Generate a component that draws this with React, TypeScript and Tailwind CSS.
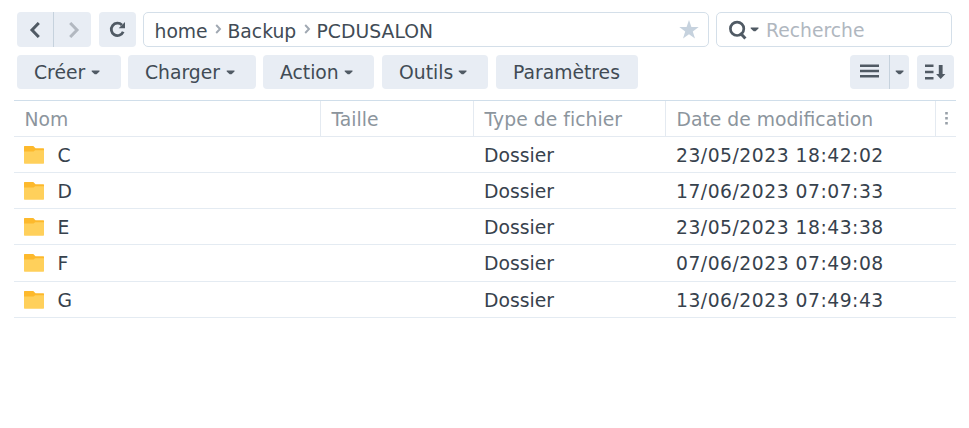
import { ReactNode } from "react";

const menus = [
  { label: "Créer", caret: true, size: "w-[104px] mr-[7px]" },
  { label: "Charger", caret: true, size: "w-[128px] mr-[7px]" },
  { label: "Action", caret: true, size: "w-[111px] mr-2" },
  { label: "Outils", caret: true, size: "w-[106px] mr-2" },
  { label: "Paramètres", caret: false, size: "w-[142px]" },
];

const files = [
  { name: "C", date: "23/05/2023 18:42:02", height: "h-9" },
  { name: "D", date: "17/06/2023 07:07:33", height: "h-9" },
  { name: "E", date: "23/05/2023 18:43:38", height: "h-9" },
  { name: "F", date: "07/06/2023 07:49:08", height: "h-[37px]" },
  { name: "G", date: "13/06/2023 07:49:43", height: "h-9" },
];

function Caret() {
  return (
    <svg width="9" height="5" viewBox="0 0 9 5" className="shrink-0">
      <path d="M0.7 0.4h7.8v1L5.5 4.3h-1.8L0.7 1.4z" fill="#505a64" />
    </svg>
  );
}

function Crumb() {
  return (
    <svg width="7" height="10" viewBox="0 0 7 10" className="-mt-0.5 shrink-0">
      <path d="M1.2 1l3.8 4-3.8 4" fill="none" stroke="#a0a8b2" strokeWidth="1.9" />
    </svg>
  );
}

function Folder() {
  return (
    <svg width="20" height="18" viewBox="0 0 20 18" className="shrink-0">
      <path d="M0 0.6Q0 0 .6 0h8.7l2.2 2.2H19.4q.6 0 .6.6V8H0z" fill="#fdb92c" />
      <path d="M0 5.6h9.6l1.5-1.3H20v12.8q0 .6-.6.6H.6q-.6 0-.6-.6z" fill="#ffd05b" />
    </svg>
  );
}

function HeadCell({ children, className }: { children?: ReactNode; className: string }) {
  return (
    <div className={`flex items-center border-[#e4eaf1] pt-0.5 pl-[10.5px] ${className}`}>
      {children}
    </div>
  );
}

export default function App() {
  return (
    <div className="h-[428px] w-[969px] overflow-hidden bg-white pt-3 font-['DejaVu_Sans',sans-serif] text-[18.75px] leading-6 whitespace-nowrap text-[#414b55]">
      <div className="flex h-[35px] pl-[17px]">
        <div className="mr-2 flex w-[74px] overflow-hidden rounded bg-[#e8edf4]">
          <button className="flex w-[37px] items-center justify-center border-r border-[#c6d2dd]">
            <svg width="12" height="16" viewBox="0 0 12 16">
              <path d="M9.8 1L3 8l6.8 7" fill="none" stroke="#505a64" strokeWidth="3" />
            </svg>
          </button>
          <button className="flex w-[37px] items-center justify-center pl-0.5">
            <svg width="12" height="16" viewBox="0 0 12 16">
              <path d="M2.2 1L9 8l-6.8 7" fill="none" stroke="#b2b8c0" strokeWidth="3" />
            </svg>
          </button>
        </div>
        <button className="mr-[7px] flex w-[37px] items-center justify-center rounded bg-[#e8edf4]">
          <svg width="17" height="17" viewBox="0 0 17 17">
            <path
              d="M12.9 4A6.2 6.2 0 1 0 14.2 10.8"
              fill="none"
              stroke="#505a64"
              strokeWidth="2.8"
            />
            <path d="M16 1v6.3H9.7z" fill="#505a64" />
          </svg>
        </button>
        <div className="mr-[7px] flex w-[566px] items-center rounded-[5px] border border-[#d4dfe9] pl-[10.5px]">
          <span className="mt-1 w-[60px]">home</span>
          <Crumb />
          <span className="mt-1 ml-1.5 w-[76px]">Backup</span>
          <Crumb />
          <span className="mt-1 ml-1.5 tracking-[0.05px]">PCDUSALON</span>
          <svg width="20" height="19" viewBox="0 0 20 19" className="mr-[9px] ml-auto">
            <path
              d="M10 0l2.4 7h7.3l-5.9 4.4 2.2 7.1L10 14.2l-6 4.3 2.2-7.1L.3 7h7.3z"
              fill="#c6d2de"
            />
          </svg>
        </div>
        <div className="flex w-[236px] items-center rounded-[5px] border border-[#d4dfe9] pl-3">
          <svg width="19" height="20" viewBox="0 0 19 20" className="mr-[2px]">
            <circle cx="8.1" cy="8.8" r="6.7" fill="none" stroke="#505a64" strokeWidth="2.7" />
            <path d="M11.2 13l5.2 5.6" stroke="#505a64" strokeWidth="3" />
          </svg>
          <Caret />
          <input
            placeholder="Recherche"
            className="mt-0.5 ml-[7px] w-[150px] bg-transparent outline-none placeholder:text-[#b0b7bf]"
          />
        </div>
      </div>

      <div className="mt-2 flex h-[34px] pl-[17px]">
        {menus.map((menu) => (
          <button
            key={menu.label}
            className={`flex items-center rounded bg-[#e8edf4] pl-[17px] ${menu.size}`}
          >
            <span className="mt-0.5">{menu.label}</span>
            {menu.caret && (
              <span className="mr-[21px] ml-auto">
                <Caret />
              </span>
            )}
          </button>
        ))}
        <div className="mr-2 ml-auto flex w-[59px] rounded bg-[#e8edf4]">
          <button className="flex w-10 items-center border-r border-[#c6d2dd] pl-2.5">
            <svg width="19" height="14" viewBox="0 0 19 14" className="-mt-0.5">
              <path d="M0 1.8h19M0 7h19M0 12.2h19" stroke="#505a64" strokeWidth="2.5" />
            </svg>
          </button>
          <button className="flex items-center pl-[5px]">
            <Caret />
          </button>
        </div>
        <button className="mr-[15px] flex w-[37px] items-center rounded bg-[#e8edf4] pl-2">
          <svg width="21" height="16" viewBox="0 0 21 16">
            <path d="M0 1.8h8.5M0 8h8.5M0 14.2h8.5" stroke="#505a64" strokeWidth="2.4" />
            <path d="M13.8 1h3.8v9h2.8L15.7 15l-4.6-5h2.7z" fill="#505a64" />
          </svg>
        </button>
      </div>

      <div className="mt-[11px] ml-3.5 w-[942px] border-t border-[#d0deea]">
        <div className="flex h-9 border-b border-[#e4eaf1] text-[#8c959d]">
          <HeadCell className="w-[307px] border-r">Nom</HeadCell>
          <HeadCell className="w-[153px] border-r">Taille</HeadCell>
          <HeadCell className="w-[192px] border-r tracking-[0.05px]">Type de fichier</HeadCell>
          <HeadCell className="w-[270px] border-r">Date de modification</HeadCell>
          <div className="flex flex-1 items-center pl-[9px]">
            <svg width="3" height="13" viewBox="0 0 3 13">
              <path
                d="M.2 0h2.6v2.6H.2zM.2 5h2.6v2.6H.2zM.2 10h2.6v2.6H.2z"
                fill="#98a0a8"
              />
            </svg>
          </div>
        </div>
        {files.map((file) => (
          <div
            key={file.name}
            className={`flex items-center border-b border-[#e4ebf2] text-[#37424d] ${file.height}`}
          >
            <div className="flex w-[460px] items-center pl-2.5">
              <Folder />
              <span className="mt-0.5 ml-[13.5px]">{file.name}</span>
            </div>
            <div className="mt-0.5 w-[192px] pl-2.5">Dossier</div>
            <div className="mt-0.5 pl-2.5 tracking-[0.5px]">{file.date}</div>
          </div>
        ))}
      </div>
    </div>
  );
}
